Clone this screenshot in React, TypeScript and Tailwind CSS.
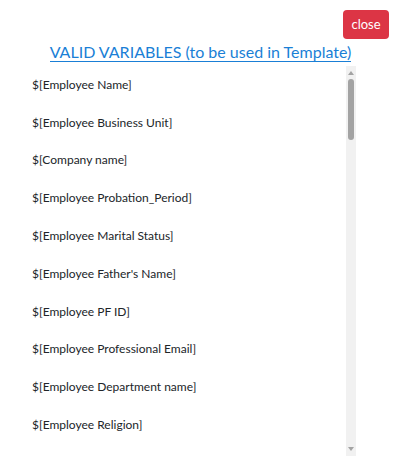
const VARIABLES = [
  'Employee Name',
  'Employee Business Unit',
  'Company name',
  'Employee Probation_Period',
  'Employee Marital Status',
  "Employee Father's Name",
  'Employee PF ID',
  'Employee Professional Email',
  'Employee Department name',
  'Employee Religion',
]

export default function App() {
  return (
    <div className="w-[401px] h-[473px] bg-white font-['Lato',sans-serif] text-[#212529]">
      {/* Top bar */}
      <div className="flex justify-end pt-[10px] pr-[12px]">
        <button className="h-[29px] w-[46px] rounded-[4px] bg-[#dc3545] text-[13px] text-white">close</button>
      </div>

      {/* Title */}
      <div className="mt-[1px] text-center">
        <span className="text-[16px] leading-[20px] text-[#1a7fd6] border-b-[1.5px] border-[#1a7fd6]">
          VALID VARIABLES (to be used in Template)
        </span>
      </div>

      {/* Variable list */}
      <div className="flex mt-[2px] ml-[20px] w-[336px] h-[390px]">
        <div className="flex-1 overflow-hidden pl-[12px]">
          {VARIABLES.map(v => (
            <p key={v} className="h-[37.8px] flex items-center text-[12px]">${'['}{v}{']'}</p>
          ))}
        </div>
        {/* Scrollbar */}
        <div className="w-[10px] bg-[#f1f1f1] flex flex-col items-center">
          <svg width="6" height="4" viewBox="0 0 6 4" className="mt-[5px]">
            <path d="M3 0L6 4H0z" fill="#a3a3a3" />
          </svg>
          <div className="mt-[4px] w-[6px] h-[61px] rounded-full bg-[#a3a3a3]" />
          <div className="flex-1" />
          <svg width="6" height="4" viewBox="0 0 6 4" className="mb-[5px]">
            <path d="M0 0H6L3 4z" fill="#a3a3a3" />
          </svg>
        </div>
      </div>
    </div>
  )
}
